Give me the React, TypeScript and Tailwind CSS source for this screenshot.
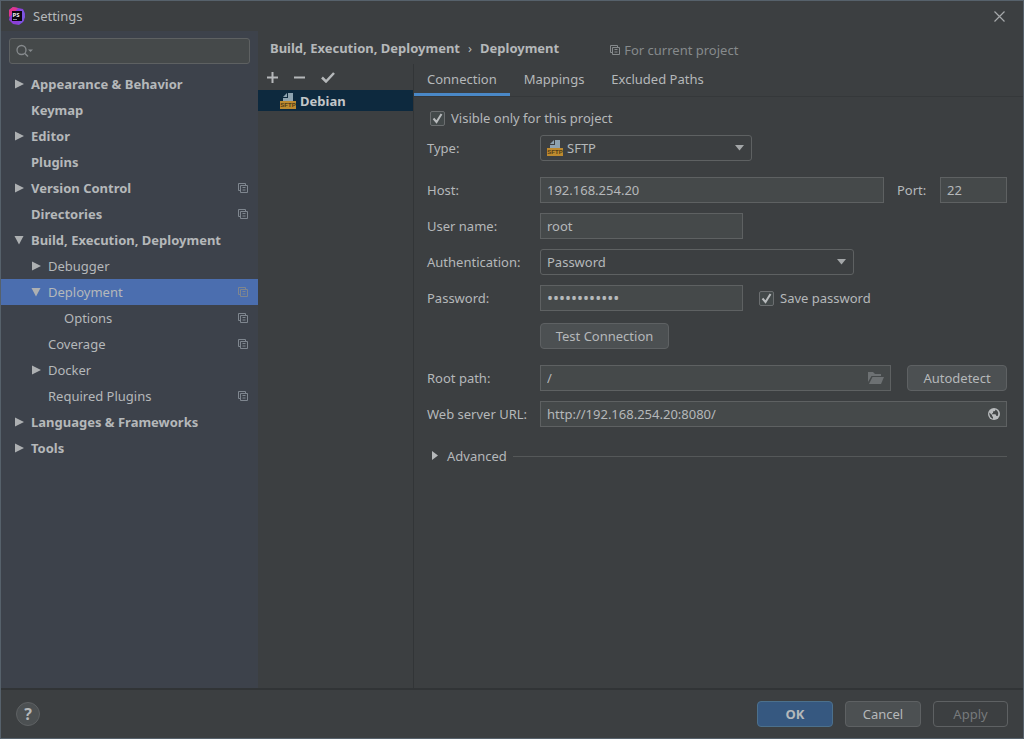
import { useState } from "react";

interface TreeItem {
  label: string;
  level: number;
  bold?: boolean;
  arrow?: "right" | "down";
  perProject?: boolean;
}

const TREE: TreeItem[] = [
  { label: "Appearance & Behavior", level: 0, bold: true, arrow: "right" },
  { label: "Keymap", level: 0, bold: true },
  { label: "Editor", level: 0, bold: true, arrow: "right" },
  { label: "Plugins", level: 0, bold: true },
  { label: "Version Control", level: 0, bold: true, arrow: "right", perProject: true },
  { label: "Directories", level: 0, bold: true, perProject: true },
  { label: "Build, Execution, Deployment", level: 0, bold: true, arrow: "down" },
  { label: "Debugger", level: 1, arrow: "right" },
  { label: "Deployment", level: 1, arrow: "down", perProject: true },
  { label: "Options", level: 2, perProject: true },
  { label: "Coverage", level: 1, perProject: true },
  { label: "Docker", level: 1, arrow: "right" },
  { label: "Required Plugins", level: 1, perProject: true },
  { label: "Languages & Frameworks", level: 0, bold: true, arrow: "right" },
  { label: "Tools", level: 0, bold: true, arrow: "right" },
];

const TABS = ["Connection", "Mappings", "Excluded Paths"];
const INDENT = ["pl-[13px]", "pl-[30px]", "pl-[46px]"];

const field = "h-[26px] border border-[#5e6162] bg-[#45494a] px-1.5 text-[#b5b8ba] outline-none focus:border-[#466d94]";
const select = "block h-[26px] w-full appearance-none rounded-[3px] border border-[#5e6162] bg-[#3c3f41] pr-7 text-[#b5b8ba] outline-none";
const button = "h-[26px] rounded border border-[#5e6163] bg-[#4c5052] text-[#b5b8ba]";
const rowLabel = "w-[113px] shrink-0";

function PhpStormLogo() {
  return (
    <svg width="18" height="18" viewBox="0 0 18 18" aria-hidden="true">
      <path d="M1 3 5 0l5 1 5 1 2 5-1 7-5 4-6-1-4-4 1-5z" fill="#8b3fd6" />
      <path d="M1 3 5 0l5 1-5 6-4 3z" fill="#e0368c" />
      <path d="m12 2 4 2 1 6-3 6-4 1 4-7z" fill="#7a55e0" />
      <rect x="4" y="4" width="10" height="10" fill="#0b0710" />
      <text x="4.5" y="9.5" fontSize="6" fontWeight="700" fill="#f0eef5" fontFamily="Noto Sans, sans-serif">PS</text>
      <path d="M5 12.5h4" stroke="#8f8a99" />
    </svg>
  );
}

function SftpIcon() {
  return (
    <svg width="16" height="16" viewBox="0 0 16 16" aria-hidden="true">
      <path d="M8 0h5v8H3V5h5z" fill="#8ea3b0" />
      <path d="M7 0v4H3z" fill="#8ea3b0" />
      <rect y="8" width="16" height="8" fill="#bd8a2f" />
      <text x="8" y="14" textAnchor="middle" fontSize="6" fontWeight="700" fill="#503c18" fontFamily="Liberation Sans, sans-serif">SFTP</text>
    </svg>
  );
}

function ProjectIcon() {
  return (
    <svg width="10" height="10" viewBox="0 0 10 10" fill="none" stroke="currentColor" aria-hidden="true">
      <path d="M2.5 7.5h-2v-7h7v2" />
      <path d="M2.5 2.5h7v7h-7zM4.5 4.5h3M4.5 7h3" />
    </svg>
  );
}

function TreeArrow({ dir }: { dir: "right" | "down" }) {
  return (
    <svg width="10" height="10" viewBox="0 0 10 10" fill="#adb0b2" aria-hidden="true">
      {dir === "right" ? <path d="M1 .5v9L10 5z" /> : <path d="M.5 1h9L5 9.5z" />}
    </svg>
  );
}

function SelectArrow() {
  return (
    <svg className="pointer-events-none absolute top-[10px] right-2" width="9" height="6" viewBox="0 0 9 6" fill="#a3a6a8" aria-hidden="true">
      <path d="M0 0h9L4.5 5.5z" />
    </svg>
  );
}

function CheckBox({ id, label }: { id: string; label: string }) {
  const [on, setOn] = useState(true);
  return (
    <label htmlFor={id} className="flex items-center gap-1.5">
      <span className="relative size-[15px]">
        <input id={id} type="checkbox" checked={on} onChange={e => setOn(e.target.checked)}
          className="block size-[15px] appearance-none rounded-xs border border-[#6b6e70] bg-[#43494a]" />
        {on && (
          <svg className="pointer-events-none absolute inset-0" width="15" height="15" viewBox="0 0 15 15" fill="none" stroke="#b8bbbd" strokeWidth="2" aria-hidden="true">
            <path d="m3.5 7.5 3 3.5 5-8" />
          </svg>
        )}
      </span>
      {label}
    </label>
  );
}

function Sidebar() {
  const [active, setActive] = useState("Deployment");
  return (
    <aside className="w-[257px] shrink-0 bg-[#3d424b] pt-[7px]">
      <div className="mx-2 flex h-[26px] items-center rounded-[3px] border border-[#5e6162] bg-[#45494a] pl-1.5">
        <svg width="18" height="14" viewBox="0 0 18 14" fill="none" stroke="#868a8d" aria-hidden="true">
          <circle cx="5.5" cy="6" r="4.5" strokeWidth="1.3" />
          <path d="m9 9.5 3 3" strokeWidth="1.5" />
          <path d="M12 5.5h5L14.5 8z" fill="#868a8d" stroke="none" />
        </svg>
        <input type="text" aria-label="Search settings" className="min-w-0 flex-1 bg-transparent px-1 outline-none" />
      </div>
      <nav className="mt-[7px]">
        {TREE.map(t => (
          <button key={t.label} type="button" onClick={() => setActive(t.label)}
            className={`flex h-[26px] w-full items-center pr-2.5 text-left ${INDENT[t.level]} ${t.bold ? "font-bold" : ""} ${active === t.label ? "bg-[#4b6eaf]" : ""}`}>
            <span className="w-[17px] shrink-0">{t.arrow && <TreeArrow dir={t.arrow} />}</span>
            <span className="flex-1 whitespace-nowrap">{t.label}</span>
            {t.perProject && <span className="text-[#7f868f]"><ProjectIcon /></span>}
          </button>
        ))}
      </nav>
    </aside>
  );
}

function ServerList() {
  return (
    <section className="w-[155px] shrink-0">
      <div className="flex h-[26px] items-center gap-4 pl-[9px] text-[#b5b8ba]">
        <button type="button" aria-label="Add">
          <svg width="11" height="11" viewBox="0 0 11 11" stroke="currentColor" strokeWidth="2"><path d="M5.5 0v11M0 5.5h11" /></svg>
        </button>
        <button type="button" aria-label="Remove">
          <svg width="11" height="11" viewBox="0 0 11 11" stroke="currentColor" strokeWidth="2"><path d="M0 5.5h11" /></svg>
        </button>
        <button type="button" aria-label="Use as default">
          <svg width="14" height="11" viewBox="0 0 14 11" fill="none" stroke="currentColor" strokeWidth="2.5"><path d="m1 5.5 4 4L13 1" /></svg>
        </button>
      </div>
      <button type="button" className="flex h-[21px] w-full items-center gap-1 bg-[#0d293e] pl-[22px] font-bold text-[#c3c6c8]">
        <SftpIcon />
        Debian
      </button>
    </section>
  );
}

function ConnectionForm() {
  const [advanced, setAdvanced] = useState(false);
  return (
    <form className="pr-4 pl-[13px]" onSubmit={e => e.preventDefault()}>
      <div className="flex h-[38px] items-center pt-1 pl-[3px]">
        <CheckBox id="visible" label="Visible only for this project" />
      </div>

      <div className="flex items-center">
        <label htmlFor="type" className={rowLabel}>Type:</label>
        <div className="relative w-[212px]">
          <select id="type" defaultValue="SFTP" className={`${select} pl-[26px]`}>
            <option>SFTP</option>
            <option>FTP</option>
          </select>
          <span className="pointer-events-none absolute top-[5px] left-[7px]"><SftpIcon /></span>
          <SelectArrow />
        </div>
      </div>

      <div className="mt-4 flex items-center">
        <label htmlFor="host" className={rowLabel}>Host:</label>
        <input id="host" type="text" defaultValue="192.168.254.20" className={`${field} min-w-0 flex-1`} />
        <label htmlFor="port" className="w-14 shrink-0 pl-[13px]">Port:</label>
        <input id="port" type="text" defaultValue="22" className={`${field} w-[67px]`} />
      </div>

      <div className="mt-2.5 flex items-center">
        <label htmlFor="user" className={rowLabel}>User name:</label>
        <input id="user" type="text" defaultValue="root" className={`${field} w-[203px]`} />
      </div>

      <div className="mt-2.5 flex items-center">
        <label htmlFor="auth" className={rowLabel}>Authentication:</label>
        <div className="relative w-[314px]">
          <select id="auth" defaultValue="Password" className={`${select} pl-1.5`}>
            <option>Password</option>
            <option>Key pair</option>
          </select>
          <SelectArrow />
        </div>
      </div>

      <div className="mt-2.5 flex items-center">
        <label htmlFor="password" className={rowLabel}>Password:</label>
        <input id="password" type="password" defaultValue="123456789012" className={`${field} mr-4 w-[203px] text-base`} />
        <CheckBox id="save" label="Save password" />
      </div>

      <button type="button" className={`${button} mt-3 ml-[113px] block w-[129px]`}>Test Connection</button>

      <div className="mt-4 flex items-center">
        <label htmlFor="root" className={rowLabel}>Root path:</label>
        <div className="relative min-w-0 flex-1">
          <input id="root" type="text" defaultValue="/" className={`${field} block w-full pr-8`} />
          <button type="button" aria-label="Browse" className="absolute top-[7px] right-[7px] text-[#6d7173]">
            <svg width="16" height="12" viewBox="0 0 16 12" fill="currentColor" aria-hidden="true">
              <path d="M0 10V0h5l2 2h6v2H3.5z" />
              <path d="M4.5 5H16l-3 7H1z" />
            </svg>
          </button>
        </div>
        <button type="button" className={`${button} ml-4 w-[100px] shrink-0`}>Autodetect</button>
      </div>

      <div className="mt-2.5 flex items-center">
        <label htmlFor="url" className={rowLabel}>Web server URL:</label>
        <div className="relative min-w-0 flex-1">
          <input id="url" type="text" defaultValue="http://192.168.254.20:8080/" className={`${field} block w-full pr-8`} />
          <button type="button" aria-label="Open in browser" className="absolute top-[7px] right-[7px]">
            <svg width="12" height="12" viewBox="0 0 12 12" aria-hidden="true">
              <circle cx="6" cy="6" r="6" fill="#b8bbbd" />
              <path d="M1.3 4.5 4 7v1l1 1v1.7C3 10.3 1.200 8.500 1.300 4.500zM7.500 1.500 7 3 5 3.500V5L4 5.500v.7h3.500L8.500 8h1.200c1.300-2.500.5-5.300-2.200-6.500z" fill="#45494a" />
            </svg>
          </button>
        </div>
      </div>

      <div className="mt-5 flex items-center gap-1.5">
        <button type="button" aria-expanded={advanced} onClick={() => setAdvanced(!advanced)} className="flex items-center gap-2 pl-1">
          <svg width="8" height="10" viewBox="0 0 8 10" fill="#b5b8ba" aria-hidden="true"><path d="M1 0v9l6-4.5z" /></svg>
          Advanced
        </button>
        <div className="h-px flex-1 bg-[#555859]" />
      </div>
    </form>
  );
}

export default function App() {
  const [tab, setTab] = useState("Connection");

  return (
    <div className="flex min-h-screen flex-col border border-[#56616b] bg-[#3c3f41] font-['Noto_Sans','Open_Sans',sans-serif] text-[13px] leading-[18px] text-[#b5b8ba]">
      <header className="flex h-[30px] items-center gap-[7px] pr-[18px] pl-[7px]">
        <PhpStormLogo />
        <h1 className="flex-1">Settings</h1>
        <button type="button" aria-label="Close">
          <svg width="11" height="11" viewBox="0 0 11 11" stroke="#a5a8aa" strokeWidth="1.2" aria-hidden="true"><path d="m.5.5 10 10M10.5.5l-10 10" /></svg>
        </button>
      </header>

      <div className="flex flex-1">
        <Sidebar />
        <main className="flex min-w-0 flex-1 flex-col">
          <div className="flex h-[33px] items-center pl-3">
            <div className="flex gap-2 font-bold whitespace-nowrap">
              <span>Build, Execution, Deployment</span>
              <span className="font-normal">›</span>
              <span>Deployment</span>
            </div>
            <div className="mt-1 ml-[51px] flex items-center gap-1 whitespace-nowrap text-[#868a8c]">
              <ProjectIcon />
              For current project
            </div>
          </div>

          <div className="flex flex-1">
            <ServerList />
            <section className="min-w-0 flex-1 border-l border-[#323537]">
              <div role="tablist" className="flex h-[33px] gap-px border-b border-[#35383a]">
                {TABS.map(t => (
                  <button key={t} type="button" role="tab" aria-selected={tab === t} onClick={() => setTab(t)}
                    className={`border-b-3 px-[13px] ${tab === t ? "border-[#4a88c7]" : "border-transparent"}`}>
                    {t}
                  </button>
                ))}
              </div>
              {tab === "Connection" && <ConnectionForm />}
            </section>
          </div>
        </main>
      </div>

      <footer className="flex h-[50px] shrink-0 items-center gap-3 border-t-2 border-[#313436] px-[15px]">
        <button type="button" aria-label="Help" className="mr-auto size-6 rounded-full border border-[#5e6163] bg-[#4c5052] text-base leading-none font-bold">?</button>
        <button type="button" className="h-[26px] w-[76px] rounded border border-[#4c708c] bg-[#365880] font-bold">OK</button>
        <button type="button" className={`${button} w-[76px]`}>Cancel</button>
        <button type="button" disabled className="h-[26px] w-[75px] rounded border border-[#5e6163] text-[#777a7c]">Apply</button>
      </footer>
    </div>
  );
}
